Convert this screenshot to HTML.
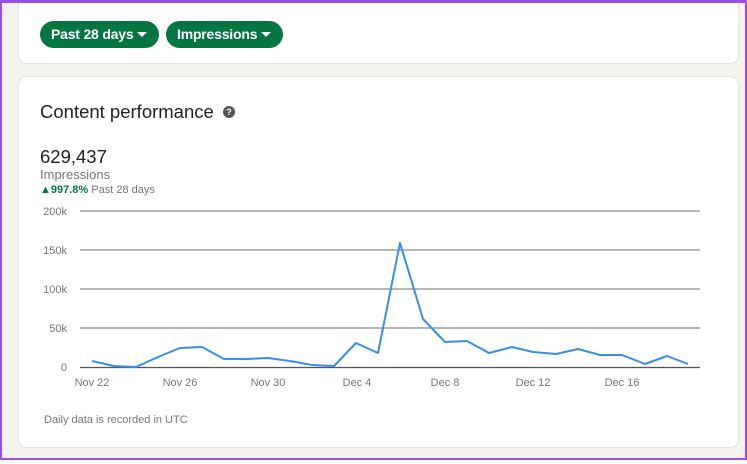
<!DOCTYPE html>
<html><head><meta charset="utf-8"><style>
*{margin:0;padding:0;box-sizing:border-box}
html,body{width:747px;height:464px;overflow:hidden;background:#fff}
.bg{position:absolute;left:0;top:0;width:747px;height:460px;background:#f3f2ef}
.frame{position:absolute;left:0;top:0;width:747px;height:460px;border:2px solid #9b4dea;border-top:3px solid #9b4dea;z-index:10}
.card{position:absolute;background:#fff;border-radius:8px;box-shadow:0 0 0 1px #e6e4df}
.btn{position:absolute;top:21px;height:27px;border-radius:14px;background:#057642;color:#fff;font:bold 14px "Liberation Sans",sans-serif;line-height:27px;padding-left:11px;letter-spacing:-0.2px}
.btn:after{content:"";position:absolute;right:12px;top:11px;border:5px solid transparent;border-top:5px solid #fff;border-bottom:0}
.t{position:absolute;font-family:"Liberation Sans",sans-serif;white-space:nowrap}
</style></head><body>
<div class="bg"></div>
<div class="frame"></div>
<div class="card" style="left:19px;top:-10px;width:719px;height:73px"></div>
<div class="btn" style="left:40px;width:119px">Past 28 days</div>
<div class="btn" style="left:166px;width:117px">Impressions</div>
<div class="card" style="left:19px;top:77px;width:719px;height:370px"></div>
<div class="t" style="left:40px;top:101px;font-size:18.5px;color:#222">Content performance</div>
<div style="position:absolute;left:223px;top:106px;width:12px;height:12px;border-radius:50%;background:#555;color:#fff;font:bold 9px 'Liberation Sans',sans-serif;text-align:center;line-height:12px">?</div>
<div class="t" style="left:40px;top:146px;font-size:18.5px;color:#222">629,437</div>
<div class="t" style="left:40px;top:167px;font-size:13px;color:#777">Impressions</div>
<div class="t" style="left:40px;top:184px;font-size:11px;color:#777"><span style="color:#057642">▲<b>997.8%</b></span> Past 28 days</div>
<svg style="position:absolute;left:0;top:0" width="747" height="464">
<g stroke="#8c8c8c" stroke-width="1.2">
<line x1="80" y1="211" x2="700" y2="211"/><line x1="80" y1="250" x2="700" y2="250"/><line x1="80" y1="289" x2="700" y2="289"/><line x1="80" y1="328" x2="700" y2="328"/></g>
<line x1="80" y1="367.5" x2="700" y2="367.5" stroke="#555" stroke-width="1.3"/>
<g font-family="Liberation Sans,sans-serif" font-size="11" fill="#777">
<text x="67" y="215" text-anchor="end">200k</text><text x="67" y="254" text-anchor="end">150k</text><text x="67" y="293" text-anchor="end">100k</text><text x="67" y="332" text-anchor="end">50k</text><text x="67" y="371" text-anchor="end">0</text>
<text x="92" y="386" text-anchor="middle">Nov 22</text><text x="180" y="386" text-anchor="middle">Nov 26</text><text x="268" y="386" text-anchor="middle">Nov 30</text><text x="357" y="386" text-anchor="middle">Dec 4</text><text x="445" y="386" text-anchor="middle">Dec 8</text><text x="533" y="386" text-anchor="middle">Dec 12</text><text x="622" y="386" text-anchor="middle">Dec 16</text>
<text x="44" y="423">Daily data is recorded in UTC</text></g>
<polyline fill="none" stroke="#378fe9" stroke-width="2" stroke-linejoin="round" points="92,361 114,366 136,367 158,357 180,348 202,347 224,359 246,359 268,358 290,361 312,365 334,366 356,343 378,353 400,243 423,319 445,342 467,341 489,353 512,347 533,352 556,354 578,349 600,355 622,355 645,364 667,356 688,364"/>
</svg>
</body></html>
